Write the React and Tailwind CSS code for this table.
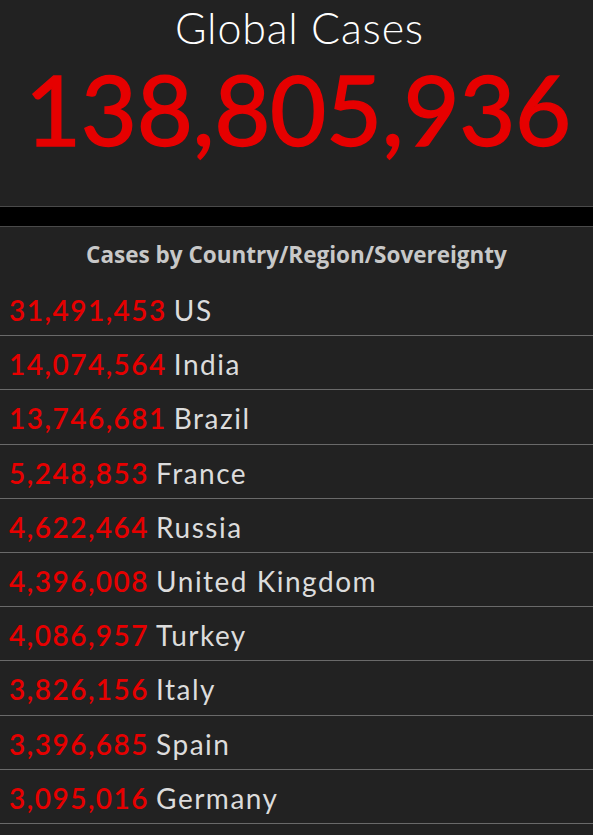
import React from 'react';

const rows = [
  ['31,491,453', 'US'],
  ['14,074,564', 'India'],
  ['13,746,681', 'Brazil'],
  ['5,248,853', 'France'],
  ['4,622,464', 'Russia'],
  ['4,396,008', 'United Kingdom'],
  ['4,086,957', 'Turkey'],
  ['3,826,156', 'Italy'],
  ['3,396,685', 'Spain'],
  ['3,095,016', 'Germany'],
];

export default function App() {
  return (
    <div className="w-[593px] h-[835px] overflow-hidden bg-black flex flex-col font-['Lato','Liberation_Sans',sans-serif]">
      {/* total panel */}
      <div className="h-[207px] shrink-0 bg-[#222222] border-b border-[#4a4a4a] flex flex-col items-center">
        <div className="mt-[4px] pl-[6px] text-[43px] leading-[48px] text-white font-light tracking-[0.8px]">Global Cases</div>
        <div className="mt-[3px] pl-[3px] text-[97px] leading-[108px] text-[#e60000] tracking-[-0.4px] [-webkit-text-stroke:1.5px_#e60000]">
          138,805,936
        </div>
      </div>

      <div className="h-[19px] shrink-0 bg-black" />

      {/* list panel */}
      <div className="flex-1 bg-[#222222] border-t border-[#4a4a4a]">
        <div className="h-[55px] pt-[1px] flex items-center justify-center text-[22.5px] font-bold text-[#c8c8c8] font-['Open_Sans','Liberation_Sans',sans-serif]">
          Cases by Country/Region/Sovereignty
        </div>
        {rows.map(([n, name]) => (
          <div key={name} className="h-[54.2px] pt-[3px] flex items-center px-[9px] border-b border-[#6a6a6a] text-[28px] tracking-[1.5px]">
            <span className="text-[#e60000] font-semibold">{n}</span>
            <span className="ml-[7px] text-[#dcdcdc]">{name}</span>
          </div>
        ))}
      </div>
    </div>
  );
}
